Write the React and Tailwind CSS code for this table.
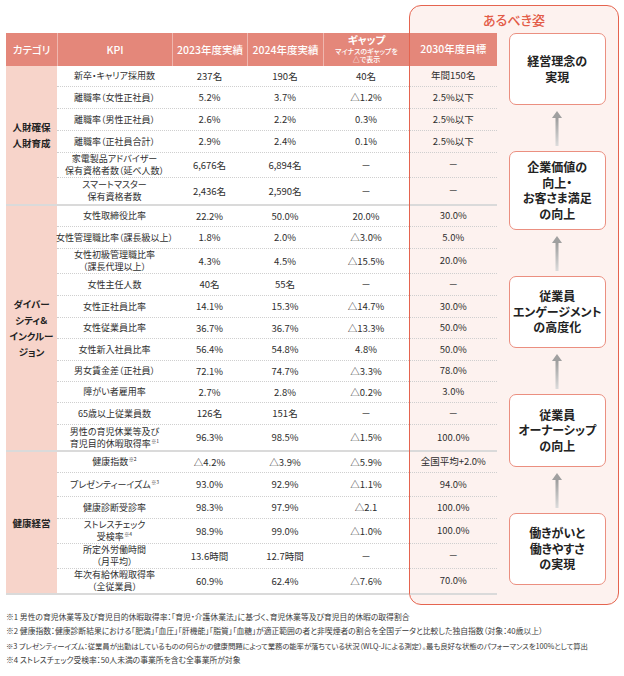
import React from 'react';

const sections = [
  {
    cat: ['人財確保', '人財育成'],
    rows: [
      { k: ['新卒・キャリア採用数'], a: '237名', b: '190名', g: '40名', t: '年間150名', h: 'h-[21px]' },
      { k: ['離職率（女性正社員）'], a: '5.2%', b: '3.7%', g: '△1.2%', t: '2.5%以下', h: 'h-[22px]' },
      { k: ['離職率（男性正社員）'], a: '2.6%', b: '2.2%', g: '0.3%', t: '2.5%以下', h: 'h-[22px]' },
      { k: ['離職率（正社員合計）'], a: '2.9%', b: '2.4%', g: '0.1%', t: '2.5%以下', h: 'h-[22px]' },
      { k: ['家電製品アドバイザー', '保有資格者数（延べ人数）'], a: '6,676名', b: '6,894名', g: '－', t: '－', h: 'h-[25px]' },
      { k: ['スマートマスター', '保有資格者数'], a: '2,436名', b: '2,590名', g: '－', t: '－', h: 'h-[26px]' },
    ],
  },
  {
    cat: ['ダイバー', 'シティ＆', 'インクルー', 'ジョン'],
    rows: [
      { k: ['女性取締役比率'], a: '22.2%', b: '50.0%', g: '20.0%', t: '30.0%', h: 'h-[21px]' },
      { k: ['女性管理職比率（課長級以上）'], a: '1.8%', b: '2.0%', g: '△3.0%', t: '5.0%', h: 'h-[22px]' },
      { k: ['女性初級管理職比率', '（課長代理以上）'], a: '4.3%', b: '4.5%', g: '△15.5%', t: '20.0%', h: 'h-[25px]' },
      { k: ['女性主任人数'], a: '40名', b: '55名', g: '－', t: '－', h: 'h-[22px]' },
      { k: ['女性正社員比率'], a: '14.1%', b: '15.3%', g: '△14.7%', t: '30.0%', h: 'h-[22px]' },
      { k: ['女性従業員比率'], a: '36.7%', b: '36.7%', g: '△13.3%', t: '50.0%', h: 'h-[21px]' },
      { k: ['女性新入社員比率'], a: '56.4%', b: '54.8%', g: '4.8%', t: '50.0%', h: 'h-[22px]' },
      { k: ['男女賃金差（正社員）'], a: '72.1%', b: '74.7%', g: '△3.3%', t: '78.0%', h: 'h-[21px]' },
      { k: ['障がい者雇用率'], a: '2.7%', b: '2.8%', g: '△0.2%', t: '3.0%', h: 'h-[21px]' },
      { k: ['65歳以上従業員数'], a: '126名', b: '151名', g: '－', t: '－', h: 'h-[22px]' },
      { k: ['男性の育児休業等及び', '育児目的休暇取得率'], note: '※1', a: '96.3%', b: '98.5%', g: '△1.5%', t: '100.0%', h: 'h-[25px]' },
    ],
  },
  {
    cat: ['健康経営'],
    rows: [
      { k: ['健康指数'], note: '※2', a: '△4.2%', b: '△3.9%', g: '△5.9%', t: '全国平均+2.0%', h: 'h-[21px]' },
      { k: ['プレゼンティーイズム'], note: '※3', a: '93.0%', b: '92.9%', g: '△1.1%', t: '94.0%', h: 'h-[24px]' },
      { k: ['健康診断受診率'], a: '98.3%', b: '97.9%', g: '△2.1', t: '100.0%', h: 'h-[22px]' },
      { k: ['ストレスチェック', '受検率'], note: '※4', a: '98.9%', b: '99.0%', g: '△1.0%', t: '100.0%', h: 'h-[25px]' },
      { k: ['所定外労働時間', '（月平均）'], a: '13.6時間', b: '12.7時間', g: '－', t: '－', h: 'h-[25px]' },
      { k: ['年次有給休暇取得率', '（全従業員）'], a: '60.9%', b: '62.4%', g: '△7.6%', t: '70.0%', h: 'h-[24px]' },
    ],
  },
];

const boxes = [
  ['経営理念の', '実現'],
  ['企業価値の', '向上・', 'お客さま満足', 'の向上'],
  ['従業員', 'エンゲージメント', 'の高度化'],
  ['従業員', 'オーナーシップ', 'の向上'],
  ['働きがいと', '働きやすさ', 'の実現'],
];

const boxHeights = ['h-[72px]', 'h-[79px]', 'h-[72px]', 'h-[73px]', 'h-[72px]'];

function Arrow() {
  return (
    <div className="h-[46px] flex justify-center pt-[6px] pb-[5px]">
      <svg width="12" height="35" viewBox="0 0 12 35">
        <defs>
          <linearGradient id="ag" x1="0" y1="0" x2="0" y2="1">
            <stop offset="0" stopColor="#9c9c9c" />
            <stop offset="1" stopColor="#dcdcdc" />
          </linearGradient>
        </defs>
        <polygon points="1,7 6,0 11,7" fill="#a0a0a0" />
        <rect x="4.5" y="6.5" width="3" height="28.5" fill="url(#ag)" />
      </svg>
    </div>
  );
}

function rowBorder(last) {
  return last ? '' : 'border-b border-dotted border-[#cfcfcf]';
}

function Kpi({ r }) {
  return (
    <div className="w-[115px] flex flex-col items-center justify-center text-[9px] leading-[12px] text-center">
      {r.k.map((line, i) => (
        <span key={i} className="whitespace-nowrap">
          {line}
          {r.note && i === r.k.length - 1 ? (
            <span className="inline-block text-[5px] leading-[5px] align-top ml-[0.5px]">{r.note}</span>
          ) : null}
        </span>
      ))}
    </div>
  );
}

export default function App() {
  return (
    <div className="w-[624px] h-[676px] bg-white text-[#2e2e2e] font-['Noto_Sans_CJK_JP','Noto_Sans',sans-serif] [font-feature-settings:'palt']">
      <div className="flex pl-[6px] pt-[5px]">
        {/* table */}
        <div className="w-[403px] pt-[28px]">
          <div className="h-[33px] flex bg-[#e4877a] text-white text-[10.5px] font-medium">
            <div className="w-[51px] flex items-center justify-center">カテゴリ</div>
            <div className="w-[115px] flex items-center justify-center border-l border-white/40">KPI</div>
            <div className="w-[75px] flex items-center justify-center border-l border-white/40">2023年度実績</div>
            <div className="w-[76px] flex items-center justify-center border-l border-white/40">2024年度実績</div>
            <div className="w-[86px] flex flex-col items-center justify-center border-l border-white/40 leading-none">
              <span className="text-[10.5px] font-bold">ギャップ</span>
              <span className="text-[7px] leading-[8.5px] mt-[1px]">マイナスのギャップを</span>
              <span className="text-[7px] leading-[8.5px]">△で表示</span>
            </div>
          </div>
          {sections.map((s, si) => (
            <div key={si} className="flex border-b-2 border-[#dadada]">
              <div className="w-[51px] bg-[#f7d4ca] flex flex-col items-center justify-center text-[9.5px] font-bold leading-[16px] text-[#222]">
                {s.cat.map((c, i) => (
                  <span key={i} className="whitespace-nowrap">{c}</span>
                ))}
              </div>
              <div className="w-[352px]">
                {s.rows.map((r, ri) => (
                  <div key={ri} className={`flex ${r.h} ${rowBorder(ri === s.rows.length - 1)}`}>
                    <Kpi r={r} />
                    <div className="w-[75px] flex items-center justify-center text-[9.5px]">{r.a}</div>
                    <div className="w-[76px] flex items-center justify-center text-[9.5px]">{r.b}</div>
                    <div className="w-[86px] flex items-center justify-center text-[9.5px]">{r.g}</div>
                  </div>
                ))}
              </div>
            </div>
          ))}
        </div>

        {/* panel */}
        <div className="w-[210px] h-[600px] border-[1.5px] border-[#e5644f] rounded-[12px] bg-[#fdf2ef] flex flex-col">
          <div className="h-[26.5px] flex items-center justify-center text-[13px] text-[#e35b47] font-medium pt-[1px]">
            あるべき姿
          </div>
          <div className="flex">
            <div className="w-[86.5px]">
              <div className="h-[33px] bg-[#e4877a] text-white text-[10.5px] font-medium flex items-center justify-center">
                2030年度目標
              </div>
              {sections.map((s, si) => (
                <div key={si} className="border-b-2 border-[#dadada]">
                  {s.rows.map((r, ri) => (
                    <div key={ri} className={`flex items-center justify-center text-[9.5px] whitespace-nowrap ${r.h} ${rowBorder(ri === s.rows.length - 1)}`}>
                      {r.t}
                    </div>
                  ))}
                </div>
              ))}
            </div>
            <div className="flex-1 flex flex-col items-center">
              {boxes.map((b, i) => (
                <React.Fragment key={i}>
                  {i > 0 ? <Arrow /> : null}
                  <div className={`w-[97px] ${boxHeights[i]} bg-white border-[1.5px] border-[#eb8f80] rounded-[7px] flex flex-col items-center justify-center text-[12px] font-bold leading-[15.5px] text-[#222]`}>
                    {b.map((l, j) => (
                      <span key={j} className="whitespace-nowrap">{l}</span>
                    ))}
                  </div>
                </React.Fragment>
              ))}
            </div>
          </div>
        </div>
      </div>

      {/* footnotes */}
      <div className="pl-[6px] pt-[5px] text-[7.8px] leading-[14.3px] text-[#3a3a3a]">
        <p className="whitespace-nowrap">※1 男性の育児休業等及び育児目的休暇取得率：「育児・介護休業法」に基づく、育児休業等及び育児目的休暇の取得割合</p>
        <p className="whitespace-nowrap">※2 健康指数：健康診断結果における「肥満」「血圧」「肝機能」「脂質」「血糖」が適正範囲の者と非喫煙者の割合を全国データと比較した独自指数（対象：40歳以上）</p>
        <p className="whitespace-nowrap text-[7.4px] tracking-[-0.1px]">※3 プレゼンティーイズム：従業員が出勤はしているものの何らかの健康問題によって業務の能率が落ちている状況（WLQ-Jによる測定）。最も良好な状態のパフォーマンスを100%として算出</p>
        <p className="whitespace-nowrap">※4 ストレスチェック受検率：50人未満の事業所を含む全事業所が対象</p>
      </div>
    </div>
  );
}
